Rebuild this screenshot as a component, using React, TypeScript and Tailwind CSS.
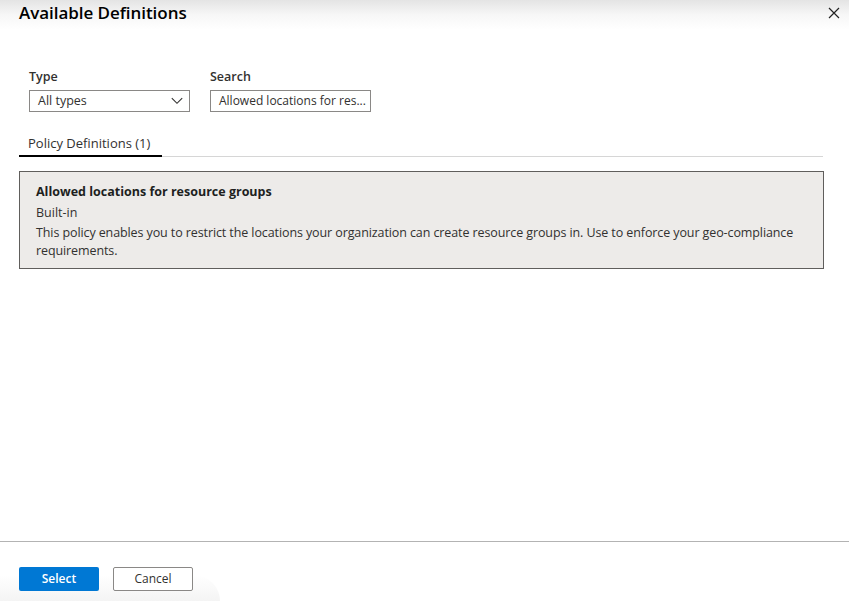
import React from "react";

export default function App() {
  const font = { fontFamily: '"Open Sans", "Noto Sans", Arial, sans-serif' };
  return (
    <div className="relative w-[849px] h-[601px] bg-white overflow-hidden text-[#323130]" style={font}>
      <div className="flex flex-col h-full">
        {/* header */}
        <div className="h-[30px] flex items-start justify-between bg-gradient-to-b from-[#e4e4e4] via-[#f7f7f7] to-white">
          <h1 className="ml-[19px] mt-[1px] text-[17px] font-semibold text-black leading-[24px] tracking-[-0.05px]">
            Available Definitions
          </h1>
          <button className="mr-[8px] mt-[6px] w-[14px] h-[14px] flex items-center justify-center">
            <svg width="12" height="12" viewBox="0 0 12 12">
              <path d="M1 1L11 11M11 1L1 11" stroke="#222" strokeWidth="1.2" />
            </svg>
          </button>
        </div>

        {/* filters */}
        <div className="flex gap-[20px] ml-[29px] mt-[38px]">
          <div className="flex flex-col">
            <label className="text-[12.5px] font-semibold leading-[17px] text-[#323130]">Type</label>
            <div className="mt-[5px] w-[161px] h-[22px] border border-[#8a8886] flex items-center justify-between pl-[8px] pr-[6px]">
              <span className="text-[12.5px] text-[#323130] pt-[1px]">All types</span>
              <svg width="12" height="8" viewBox="0 0 12 8">
                <path d="M0.8 1.2L6 6.3L11.2 1.2" fill="none" stroke="#323130" strokeWidth="1.1" />
              </svg>
            </div>
          </div>
          <div className="flex flex-col">
            <label className="text-[12.5px] font-semibold leading-[17px] text-[#323130]">Search</label>
            <div className="mt-[5px] w-[161px] h-[22px] border border-[#8a8886] flex items-center pl-[8px]">
              <span className="text-[12px] text-[#323130] whitespace-nowrap">Allowed locations for res...</span>
            </div>
          </div>
        </div>

        {/* tabs */}
        <div className="mx-[19px] mt-[19px] w-[804px] flex items-end border-b border-[#d6d6d6] h-[26px]">
          <div className="w-[143px] h-[27px] border-b-2 border-black -mb-[1px] flex items-start pl-[9px] pt-[4px]">
            <span className="text-[13px] leading-[18px] text-[#323130]">Policy Definitions (1)</span>
          </div>
        </div>

        {/* card */}
        <div className="mx-[19px] mt-[14px] w-[805px] h-[98px] bg-[#edebe9] border border-[#605e5c] pl-[16px] pr-[2px] pt-[11px]">
          <div className="text-[12.5px] font-bold leading-[18px] text-[#201f1e]">Allowed locations for resource groups</div>
          <div className="mt-[3px] text-[12.5px] leading-[18px] text-[#323130]">Built-in</div>
          <div className="mt-[2px] text-[12.5px] leading-[18px] text-[#323130] tracking-[-0.1px]">
            This policy enables you to restrict the locations your organization can create resource groups in. Use to enforce your geo-compliance requirements.
          </div>
        </div>

        <div className="flex-1" />

        {/* footer */}
        <div className="relative h-[60px] border-t border-[#b3b3b3] flex items-start gap-[14px] pl-[19px] pt-[25px]">
          <div className="absolute left-0 bottom-0 w-[220px] h-[26px] bg-gradient-to-b from-transparent to-[#f4f4f4] rounded-tr-[120px] pointer-events-none" />
          <button className="relative w-[80px] h-[24px] bg-[#0078d4] rounded-[2px] text-white text-[12px] font-semibold leading-none">
            Select
          </button>
          <button className="relative w-[80px] h-[24px] bg-white border border-[#8a8886] rounded-[2px] text-[#323130] text-[12px] leading-none">
            Cancel
          </button>
        </div>
      </div>
    </div>
  );
}
